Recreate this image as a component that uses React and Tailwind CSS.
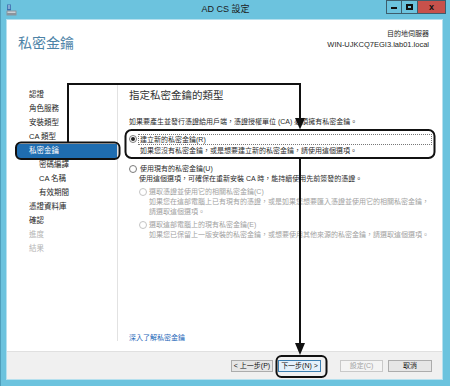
import React from "react";

const font = { fontFamily: '"Liberation Sans", "Noto Sans CJK TC", sans-serif' };

function Radio({ checked, disabled }) {
  return (
    <span
      className={`flex items-center justify-center w-[8px] h-[8px] rounded-full border bg-white shrink-0 ${
        disabled ? "border-[#c4c4c4]" : "border-[#7a7a7a]"
      }`}
    >
      {checked && <span className="w-[4px] h-[4px] rounded-full bg-[#222]" />}
    </span>
  );
}

function NavItem({ label, sub, selected, disabled }) {
  if (selected) {
    return (
      <div className="h-[14px] leading-[14px] ml-[10px] pl-[12px] bg-[#1f6db0] text-white">
        {label}
      </div>
    );
  }
  return (
    <div
      className={`h-[14px] leading-[14px] ${sub ? "pl-[32px]" : "pl-[22px]"} ${
        disabled ? "text-[#b5b5b5]" : "text-[#1e1e1e]"
      }`}
    >
      {label}
    </div>
  );
}

function Btn({ children, focused, disabled }) {
  return (
    <div
      className={`h-[12px] leading-[10px] text-center text-[7px] border ${
        focused
          ? "border-[#3c7fb1] bg-[#e5f1fb] text-[#111]"
          : disabled
          ? "border-[#c9c9c9] bg-[#f4f4f4] text-[#a3a3a3]"
          : "border-[#acacac] bg-[#e6e6e6] text-[#111]"
      }`}
    >
      {children}
    </div>
  );
}

export default function App() {
  const nav = [
    { label: "認證" },
    { label: "角色服務" },
    { label: "安裝類型" },
    { label: "CA 類型" },
    { label: "私密金鑰", selected: true },
    { label: "密碼編譯", sub: true },
    { label: "CA 名稱", sub: true },
    { label: "有效期間", sub: true },
    { label: "憑證資料庫" },
    { label: "確認" },
    { label: "進度", disabled: true },
    { label: "結果", disabled: true },
  ];

  return (
    <div
      className="relative w-[450px] h-[386px] overflow-hidden bg-[#6cc3de] flex flex-col border-l border-[#4f9fbb]"
      style={font}
    >
      {/* title bar */}
      <div className="h-[19px] grid grid-cols-[1fr_auto_1fr] items-start">
        <div className="pl-[5px] pt-[4px]">
          <svg width="11" height="12" viewBox="0 0 11 12">
            <rect x="1" y="0.5" width="4" height="6" fill="#3a6fb0" />
            <rect x="1.8" y="1.5" width="2.4" height="1" fill="#cfe3f5" />
            <rect x="1.8" y="3.5" width="2.4" height="1" fill="#cfe3f5" />
            <rect x="0.5" y="6.5" width="10" height="5" rx="0.5" fill="#8a949c" />
            <rect x="1.5" y="7.5" width="8" height="1.5" fill="#c9d0d5" />
          </svg>
        </div>
        <div className="pt-[3px] text-[9px] leading-[12px] text-[#1b1b1b]">AD CS 設定</div>
        <div className="flex justify-end pr-[4px]">
          <div className="w-[16px] h-[14px] border border-[#3d5d6c] flex items-end justify-center pb-[4px]">
            <div className="w-[6px] h-[2px] bg-[#111]" />
          </div>
          <div className="w-[16px] h-[14px] border-y border-r border-[#3d5d6c] flex items-center justify-center">
            <div className="w-[7px] h-[6px] border-[2px] border-t-[2px] border-[#111]" />
          </div>
          <div className="w-[28px] h-[14px] bg-[#c7514b] border-y border-r border-[#3d5d6c] flex items-center justify-center text-[9px] font-bold leading-none text-[#111]">
            x
          </div>
        </div>
      </div>

      {/* window body */}
      <div className="flex-1 ml-[5px] mr-[7px] mb-[6px] bg-white flex flex-col border border-[#b6e0ee]">
        {/* header */}
        <div className="h-[59px] flex justify-between">
          <div className="pl-[11px] pt-[13px] text-[14px] leading-[20px] text-[#4d83a7]">私密金鑰</div>
          <div className="pr-[13px] pt-[8px] text-right text-[7px] leading-[11px] text-[#1e1e1e]">
            <div>目的地伺服器</div>
            <div className="text-[7.5px]">WIN-UJKCQ7EGI3.lab01.local</div>
          </div>
        </div>

        {/* main */}
        <div className="flex-1 flex">
          <div className="w-[110px] pt-[9px] text-[7.5px]">
            {nav.map((n) => (
              <NavItem key={n.label} {...n} />
            ))}
          </div>
          <div className="w-px bg-[#e2e2e2] mt-[6px] mb-[10px]" />
          <div className="flex-1 flex flex-col pl-[11px] pr-[10px] pt-[9px] text-[7px] text-[#2b2b2b]">
            <div className="h-[14px] leading-[14px] text-[10.5px] text-[#333]">指定私密金鑰的類型</div>
            <div className="mt-[15px] h-[10px] leading-[10px]">
              如果要產生並發行憑證給用戶端，憑證授權單位 (CA) 必須擁有私密金鑰。
            </div>

            <div className="mt-[7px] h-[10px] flex items-center">
              <Radio checked />
              <div className="ml-[1px] flex-1 h-[11px] leading-[10px] border border-dotted border-[#777] pl-[1px]">
                建立新的私密金鑰(R)
              </div>
            </div>
            <div className="mt-[2px] h-[10px] leading-[10px] pl-[11px]">
              如果您沒有私密金鑰，或是想要建立新的私密金鑰，請使用這個選項。
            </div>

            <div className="mt-[8px] h-[10px] flex items-center">
              <Radio />
              <div className="ml-[3px] leading-[10px]">使用現有的私密金鑰(U)</div>
            </div>
            <div className="h-[10px] leading-[10px] pl-[10px]">
              使用這個選項，可確保在重新安裝 CA 時，能持續使用先前簽發的憑證。
            </div>

            <div className="mt-[3px] h-[10px] flex items-center pl-[10px] text-[#a2a2a2]">
              <Radio disabled />
              <div className="ml-[2px] leading-[10px]">選取憑證並使用它的相關私密金鑰(C)</div>
            </div>
            <div className="pl-[20px] text-[#a2a2a2] leading-[10px]">
              <div>如果您在這部電腦上已有現有的憑證，或是如果您想要匯入憑證並使用它的相關私密金鑰，</div>
              <div>請選取這個選項。</div>
            </div>

            <div className="mt-[3px] h-[10px] flex items-center pl-[10px] text-[#a2a2a2]">
              <Radio disabled />
              <div className="ml-[2px] leading-[10px]">選取這部電腦上的現有私密金鑰(E)</div>
            </div>
            <div className="pl-[20px] text-[#a2a2a2] leading-[10px]">
              如果您已保留上一版安裝的私密金鑰，或想要使用其他來源的私密金鑰，請選取這個選項。
            </div>

            <div className="mt-auto mb-[8px] leading-[10px] text-[#1d66b8]">深入了解私密金鑰</div>
          </div>
        </div>

        {/* footer */}
        <div className="h-[28px] bg-[#f0f0f0] border-t border-[#e0e0e0] flex justify-end items-start pt-[8px] pr-[10px]">
          <div className="w-[42px]">
            <Btn>&lt; 上一步(P)</Btn>
          </div>
          <div className="w-[43px] ml-[5px]">
            <Btn focused>下一步(N) &gt;</Btn>
          </div>
          <div className="w-[43px] ml-[19px]">
            <Btn disabled>設定(C)</Btn>
          </div>
          <div className="w-[44px] ml-[5px]">
            <Btn>取消</Btn>
          </div>
        </div>
      </div>

      {/* annotation overlay */}
      <svg className="absolute inset-0 pointer-events-none" width="450" height="386" viewBox="0 0 450 386">
        <g fill="none" stroke="#111" strokeWidth="2">
          <rect x="15" y="142.5" width="103.5" height="16.5" rx="5" />
          <rect x="124.5" y="130" width="309" height="28" rx="6" />
          <rect x="275.5" y="356" width="50" height="21" rx="5" />
          <path d="M67 142 V84 H299 V120" />
          <path d="M299 158 V345" />
        </g>
        <polygon points="294,118 304,118 299,129.5" fill="#111" />
        <polygon points="294,343 304,343 299,355" fill="#111" />
      </svg>
    </div>
  );
}
